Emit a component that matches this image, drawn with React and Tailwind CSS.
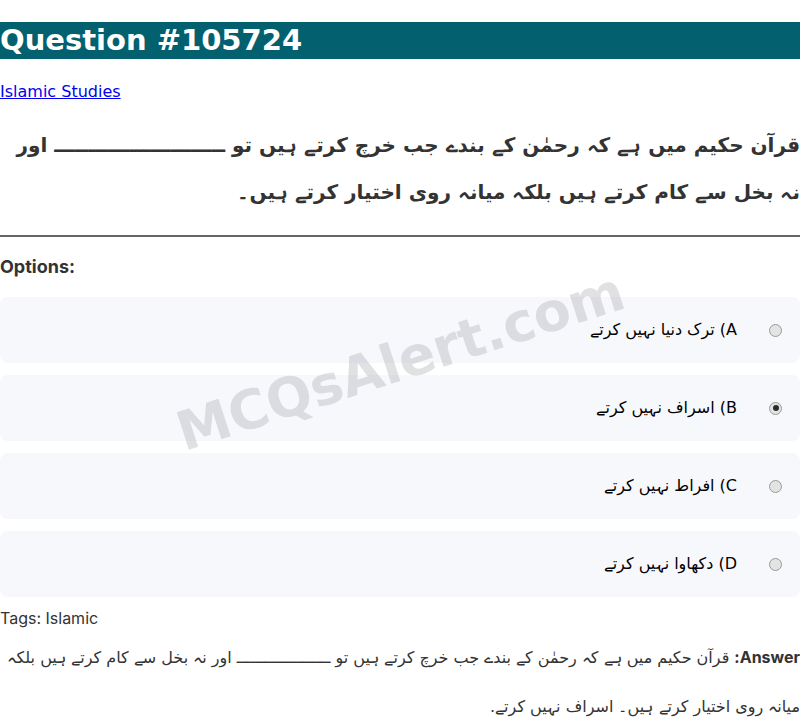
import React from 'react';

const font = { fontFamily: '"DejaVu Sans", sans-serif' };

const question =
  'قرآن حکیم میں ہے کہ رحمٰن کے بندے جب خرچ کرتے ہیں تو ـــــــــــــــــــــــــ اور نہ بخل سے کام کرتے ہیں بلکہ میانہ روی اختیار کرتے ہیں۔';

const options = [
  { key: 'A', text: 'ترک دنیا نہیں کرتے' },
  { key: 'B', text: 'اسراف نہیں کرتے', checked: true },
  { key: 'C', text: 'افراط نہیں کرتے' },
  { key: 'D', text: 'دکھاوا نہیں کرتے' },
];

function Radio({ checked }) {
  return (
    <span className="flex h-[13px] w-[13px] shrink-0 items-center justify-center rounded-full border border-[#9a9a9a] bg-[#e3e3e3]">
      {checked && <span className="h-[6px] w-[6px] rounded-full bg-[#2b2b2b]" />}
    </span>
  );
}

export default function App() {
  return (
    <div className="w-[800px] bg-white text-[#333]" style={font}>
      <h1 className="mt-[22px] h-[37px] bg-[#02606f] text-[29px] font-bold leading-[37px] text-white">
        Question #105724
      </h1>

      <div className="mt-[22px] h-[22px] leading-[22px]">
        <a href="#" className="text-[16px] text-[#0000ee] underline">
          Islamic Studies
        </a>
      </div>

      <p dir="rtl" className="mt-[19px] text-[20px] font-bold leading-[47px] text-[#333]">
        {question}
      </p>

      <hr className="mt-[19px] border-t-2 border-[#666]" />

      <h3 className="mt-[19px] text-[18px] font-bold leading-[22px] text-[#333]" style={{ fontFamily: 'Inter, sans-serif' }}>
        Options:
      </h3>

      <div className="relative mt-[19px] flex flex-col gap-[12px]">
        {options.map((o) => (
          <div
            key={o.key}
            dir="rtl"
            className="flex h-[66px] items-center gap-[32px] rounded-lg bg-[#f7f8fc] pr-[18px]"
          >
            <Radio checked={o.checked} />
            <span className="text-[16px] text-black">
              {o.key}) {o.text}
            </span>
          </div>
        ))}
        <div className="pointer-events-none absolute inset-0 flex items-center justify-center">
          <span
            className="-translate-y-[86px] -rotate-[18deg] text-[54px] font-bold text-[#9a9aa6]/30"
            style={{ fontFamily: '"DejaVu Sans", sans-serif' }}
          >
            MCQsAlert.com
          </span>
        </div>
      </div>

      <div className="mt-[10px] h-[22px] text-[16px] leading-[22px] text-[#333]" style={{ fontFamily: 'Inter, "DejaVu Sans", sans-serif' }}>
        Tags: Islamic
      </div>

      <p dir="rtl" className="mt-[4px] text-[16px] leading-[49px] text-[#333]">
        <strong style={{ fontFamily: 'Inter, sans-serif' }}>Answer:</strong> قرآن حکیم میں ہے کہ رحمٰن کے بندے جب خرچ کرتے ہیں تو ــــــــــــــــــــ اور نہ بخل سے کام کرتے ہیں بلکہ میانہ روی اختیار کرتے ہیں۔ اسراف نہیں کرتے.
      </p>
    </div>
  );
}
